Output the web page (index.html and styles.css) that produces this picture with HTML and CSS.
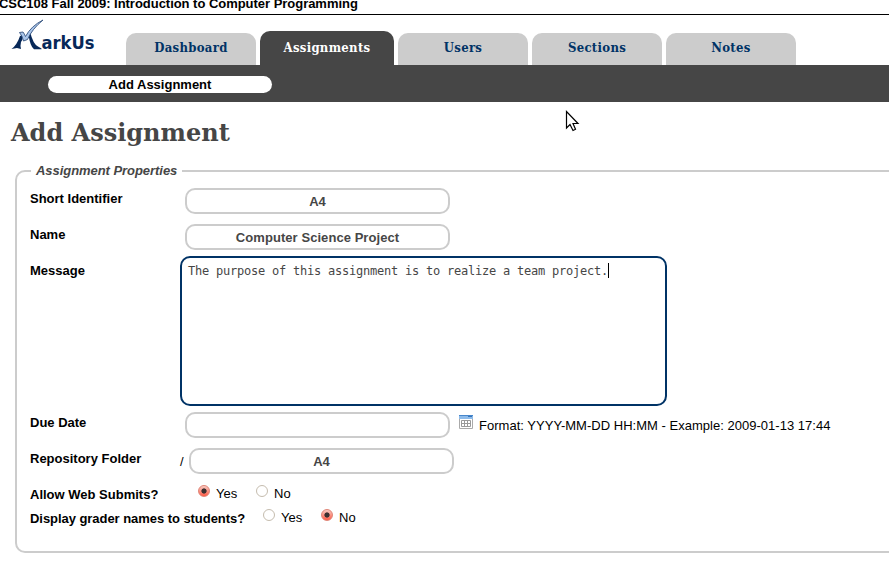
FILE: index.html
```html
<!DOCTYPE html>
<html lang="en">
<head>
<meta charset="utf-8">
<title>MarkUs - Add Assignment</title>
<link rel="stylesheet" href="styles.css">
</head>
<body>
<div class="course">CSC108 Fall 2009: Introduction to Computer Programming</div>
<header class="header">
  <svg class="logo" width="90" height="36" viewBox="0 0 90 36">
    <path d="M1.500 31Q7 27 10 18L12.500 17Q13 22 11 24Q10 28 11 31L7 30Z" fill="#072858"/>
    <path d="M18.500 16.500L20 13.500Q23 26 28 28.500L31.500 30.500V31.300H24Q20 28 18.500 16.500Z" fill="#072858"/>
    <path d="M9.500 14.500L13 14Q14.500 16 15.500 18.500Q21 8 33 2Q22 11 17.500 21.500L13.500 23Q12.500 18 9.500 14.500Z" fill="#a9c5ea" stroke="#35547f" stroke-width=".9"/>
    <text class="logo-text" x="31.500" y="31" textLength="53" lengthAdjust="spacingAndGlyphs">arkUs</text>
  </svg>
  <nav class="tabs">
    <a class="tab">Dashboard</a>
    <a class="tab active">Assignments</a>
    <a class="tab">Users</a>
    <a class="tab">Sections</a>
    <a class="tab">Notes</a>
  </nav>
</header>
<div class="subnav"><a class="pill">Add Assignment</a></div>
<h1>Add Assignment</h1>
<fieldset>
  <legend>Assignment Properties</legend>
  <div class="row"><label>Short Identifier</label><div class="field">A4</div></div>
  <div class="row"><label>Name</label><div class="field name">Computer Science Project</div></div>
  <div class="row message"><label>Message</label><div class="textarea"><span>The purpose of this assignment is to realize a team project.</span><i class="caret"></i></div></div>
  <div class="row"><label>Due Date</label><div class="field"></div>
    <svg class="calendar" width="14" height="14" viewBox="0 0 14 14">
      <path d="M.5 .5h13v13H.5z" fill="#fff" stroke="#aaa"/>
      <path d="M0 0h14v4H0z" fill="#8dbbea"/>
      <path d="M0 0h14v1H0z" fill="#4787cc"/>
      <path d="M9 1h4v1H9z" fill="#3473b8"/>
      <path d="M2.500 5.500h9v6h-9zM2.500 8.500h9M5.500 5.500v6M8.500 5.500v6" fill="none" stroke="#999"/>
    </svg>
    <span class="hint">Format: YYYY-MM-DD HH:MM - Example: 2009-01-13 17:44</span></div>
  <div class="row folder"><label>Repository Folder</label><span class="slash">/</span><div class="field">A4</div></div>
  <div class="row short"><label>Allow Web Submits?</label><i class="radio on"></i><span class="opt">Yes</span><i class="radio"></i><span class="opt">No</span></div>
  <div class="row short wide"><label>Display grader names to students?</label><i class="radio"></i><span class="opt">Yes</span><i class="radio on"></i><span class="opt">No</span></div>
</fieldset>
<svg class="cursor" width="16" height="24" viewBox="0 0 16 24">
  <path d="M1.500 1.500V18L5 14.500L8 20.500L10.500 19.300L8 13.500H13Z" fill="#fff" stroke="#000" stroke-width="1.200"/>
</svg>
</body>
</html>
```
FILE: styles.css
```css
* { box-sizing: border-box; }
body { margin: 0; height: 575px; overflow: hidden; background: #fff; color: #000; font: 13px/16px "Liberation Sans", sans-serif; }
.course { height: 15px; border-bottom: 1px solid #000; line-height: 8px; font-weight: bold; white-space: nowrap; text-indent: -1px; letter-spacing: -.03px; }
.header { display: flex; align-items: flex-end; height: 50px; }
.logo { flex: none; width: 90px; margin: 0 26px 11px 10px; }
.logo-text { font: bold 17px "DejaVu Sans", sans-serif; fill: #072858; }
.tabs { display: flex; align-items: flex-end; gap: 4px; }
.tab { width: 130px; height: 32px; padding-top: 7px; border-radius: 10px 10px 0 0; background: #ccc; color: #036; text-align: center; font: bold 13px/16px "DejaVu Serif Condensed", "DejaVu Serif", serif; letter-spacing: .3px; }
.tab.active { width: 134px; height: 34px; padding-top: 9px; background: #464646; color: #fff; }
.subnav { height: 37px; padding: 11px 0 0 48px; background: #464646; }
.pill { display: block; width: 224px; height: 17px; border-radius: 9px; background: #fff; text-align: center; font-weight: bold; line-height: 17px; }
h1 { margin: 17px 0 0 11px; height: 44px; color: #464646; font: bold 24px/28px "DejaVu Serif", serif; }
fieldset { width: 900px; height: 390px; margin: 0 0 0 15px; padding: 4px 0 0 13px; border: 2px solid #ccc; border-radius: 10px; }
legend { height: 16px; margin-left: 1px; padding: 0 5px; color: #464646; font-weight: bold; font-style: italic; letter-spacing: -.05px; }
.row { display: flex; align-items: center; height: 36px; }
.row.message { height: 152px; }
.row.short { height: 24px; align-items: flex-start; }
label { align-self: flex-start; flex: none; width: 155px; margin-top: 8px; font-weight: bold; white-space: nowrap; }
.field { flex: none; width: 265px; height: 26px; padding-top: 1px; border: 2px solid #ccc; border-radius: 10px; color: #464646; text-align: center; font-weight: bold; line-height: 22px; }
.field.name { letter-spacing: .06px; }
.message label, .folder label { width: 150px; }
.textarea { display: flex; width: 487px; height: 150px; padding: 5px 6px; border: 2px solid #036; border-radius: 10px; color: #464646; font: 12px/16px "DejaVu Sans Mono", monospace; letter-spacing: -.224px; white-space: nowrap; }
.caret { width: 1px; height: 15px; background: #000; }
.calendar { margin: -6px 6px 0 9px; }
.hint { margin-top: 1px; white-space: nowrap; letter-spacing: .02px; }
.slash { width: 9px; margin-top: 1px; }
.radio { flex: none; width: 12px; height: 12px; margin: 6px 6px 0 0; border: 1px solid #c5bcae; border-radius: 50%; background: #fff; }
.radio.on { border-color: #e08476; background: radial-gradient(circle at 50% 50%, #3b3030 0 2.200px, transparent 3px), linear-gradient(#f8cbc3, #ff5a45); }
.opt { width: 40px; margin-top: 7px; }
.short label { width: 168px; }
.wide label { width: 233px; letter-spacing: -.05px; }
.cursor { position: absolute; left: 565px; top: 110px; }
```
